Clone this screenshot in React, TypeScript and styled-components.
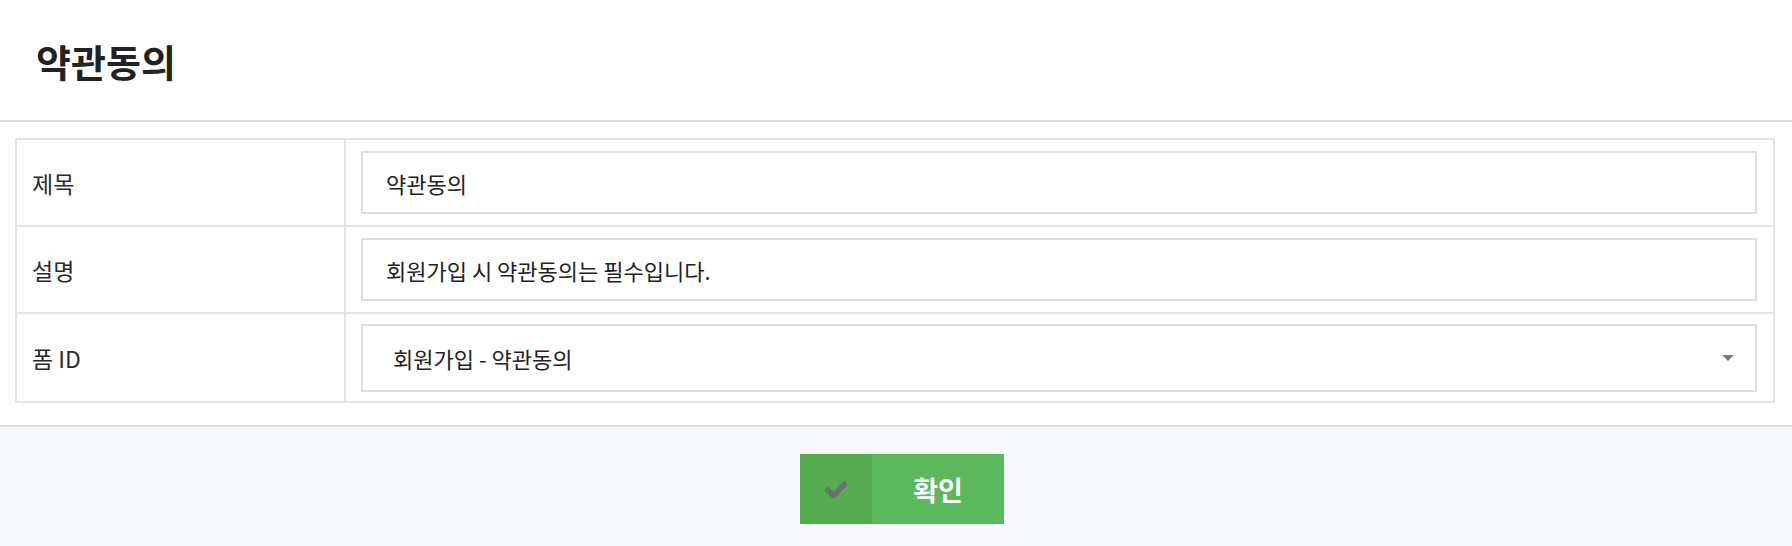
import React from "react";
import styled, { createGlobalStyle } from "styled-components";

const GlobalStyle = createGlobalStyle`
    html, body {
        margin: 0;
        padding: 0;
        background: #ffffff;
    }
    body {
        font-family: "Noto Sans CJK KR", "Noto Sans", sans-serif;
        color: #222222;
    }
`;

const Page = styled.div`
    width: 100%;
    height: 546px;
    display: flex;
    flex-direction: column;
    background: #ffffff;
`;

const Header = styled.header`
    height: 120px;
    display: flex;
    align-items: center;
    padding-left: 36px;
    border-bottom: 2px solid #dcdcdc;
`;

const Title = styled.h1`
    margin: 0;
    font-size: 38px;
    font-weight: 700;
    color: #222222;
    letter-spacing: 0;
`;

const Body = styled.div`
    padding: 16px 17px 22px 15px;
`;

const FormTable = styled.div`
    border: 2px solid #e3e3e3;
`;

const Row = styled.div`
    display: grid;
    grid-template-columns: 329px 1fr;
    & + & {
        border-top: 2px solid #e3e3e3;
    }
`;

const LabelCell = styled.div`
    display: flex;
    align-items: center;
    padding-left: 15px;
    border-right: 2px solid #e3e3e3;
    font-size: 23px;
    color: #2a2a2a;
`;

const FieldCell = styled.div<{ $padY: string }>`
    padding: ${(p) => p.$padY} 16px ${(p) => p.$padY} 15px;
`;

const TextInput = styled.input`
    box-sizing: border-box;
    width: 100%;
    height: 63px;
    border: 2px solid #dedede;
    padding: 0 23px;
    font-family: "Noto Sans CJK KR", "Noto Sans", sans-serif;
    font-size: 22px;
    color: #222222;
    background: #ffffff;
    outline: none;
`;

const SelectWrap = styled.div`
    position: relative;
`;

const Select = styled.select`
    box-sizing: border-box;
    width: 100%;
    height: 68px;
    border: 2px solid #dedede;
    border-radius: 0;
    padding: 0 40px 0 30px;
    font-family: "Noto Sans CJK KR", "Noto Sans", sans-serif;
    font-size: 22px;
    color: #222222;
    background: #ffffff;
    appearance: none;
    -webkit-appearance: none;
    outline: none;
`;

const Caret = styled.span`
    position: absolute;
    right: 23px;
    top: 50%;
    margin-top: -3px;
    width: 0;
    height: 0;
    border-left: 6px solid transparent;
    border-right: 6px solid transparent;
    border-top: 6px solid #7a7a7a;
    pointer-events: none;
`;

const Footer = styled.footer`
    flex: 1;
    display: flex;
    justify-content: center;
    align-items: flex-start;
    padding: 27px 0 0 12px;
    background: #f8f9fb;
    border-top: 2px solid #dcdcdc;
`;

const ConfirmButton = styled.button`
    display: flex;
    width: 204px;
    height: 70px;
    padding: 0;
    border: none;
    background: #5cb85c;
    cursor: pointer;
`;

const IconPart = styled.span`
    width: 72px;
    height: 100%;
    display: flex;
    align-items: center;
    justify-content: center;
    background: #56ad51;
`;

const LabelPart = styled.span`
    flex: 1;
    display: flex;
    align-items: center;
    justify-content: center;
    font-family: "Noto Sans CJK KR", "Noto Sans", sans-serif;
    font-size: 27px;
    font-weight: 700;
    color: #ffffff;
`;

const CheckIcon = () => (
    <svg width="24" height="19" viewBox="0 0 24 19">
        <polyline
            points="3.5,10 9.5,15.5 20.5,4"
            fill="none"
            stroke="#6e6e6e"
            strokeWidth="5.5"
            strokeLinecap="round"
            strokeLinejoin="round"
        />
    </svg>
);

const App: React.FC = () => {
    return (
        <Page>
            <GlobalStyle />
            <Header>
                <Title>약관동의</Title>
            </Header>
            <Body>
                <FormTable>
                    <Row>
                        <LabelCell>제목</LabelCell>
                        <FieldCell $padY="11px">
                            <TextInput defaultValue="약관동의" />
                        </FieldCell>
                    </Row>
                    <Row>
                        <LabelCell>설명</LabelCell>
                        <FieldCell $padY="11px">
                            <TextInput defaultValue="회원가입 시 약관동의는 필수입니다." />
                        </FieldCell>
                    </Row>
                    <Row>
                        <LabelCell>폼 ID</LabelCell>
                        <FieldCell $padY="9.5px">
                            <SelectWrap>
                                <Select defaultValue="terms">
                                    <option value="terms">회원가입 - 약관동의</option>
                                </Select>
                                <Caret />
                            </SelectWrap>
                        </FieldCell>
                    </Row>
                </FormTable>
            </Body>
            <Footer>
                <ConfirmButton type="button">
                    <IconPart>
                        <CheckIcon />
                    </IconPart>
                    <LabelPart>확인</LabelPart>
                </ConfirmButton>
            </Footer>
        </Page>
    );
};

export default App;
